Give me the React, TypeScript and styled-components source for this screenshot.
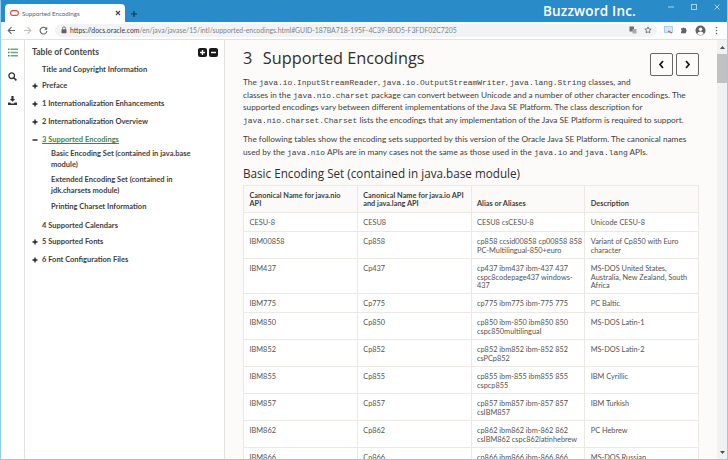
import React from 'react';
import styled, { createGlobalStyle } from 'styled-components';

interface TocEntry {
  label: string;
  mark?: 'plus' | 'minus';
  active?: boolean;
  top: number;
}

const tocEntries: TocEntry[] = [
  { label: 'Title and Copyright Information', top: 6 },
  { label: 'Preface', mark: 'plus', top: 5 },
  { label: '1 Internationalization Enhancements', mark: 'plus', top: 7 },
  { label: '2 Internationalization Overview', mark: 'plus', top: 7 },
  { label: '3 Supported Encodings', mark: 'minus', active: true, top: 7 },
];

const tocSubEntries = [
  { label: 'Basic Encoding Set (contained in java.base module)', top: 3 },
  { label: 'Extended Encoding Set (contained in jdk.charsets module)', top: 4 },
  { label: 'Printing Charset Information', top: 5 },
];

const tocAfter: TocEntry[] = [
  { label: '4 Supported Calendars', top: 8 },
  { label: '5 Supported Fonts', mark: 'plus', top: 5 },
  { label: '6 Font Configuration Files', mark: 'plus', top: 7 },
];

const rows = [
  ['CESU-8', 'CESU8', 'CESU8 csCESU-8', 'Unicode CESU-8', 19],
  ['IBM00858', 'Cp858', 'cp858 ccsid00858 cp00858 858 PC-Multilingual-850+euro', 'Variant of Cp850 with Euro character', 27],
  ['IBM437', 'Cp437', 'cp437 ibm437 ibm-437 437 cspc8codepage437 windows-437', 'MS-DOS United States, Australia, New Zealand, South Africa', 35],
  ['IBM775', 'Cp775', 'cp775 ibm775 ibm-775 775', 'PC Baltic', 19],
  ['IBM850', 'Cp850', 'cp850 ibm-850 ibm850 850 cspc850multilingual', 'MS-DOS Latin-1', 27],
  ['IBM852', 'Cp852', 'cp852 ibm852 ibm-852 852 csPCp852', 'MS-DOS Latin-2', 27],
  ['IBM855', 'Cp855', 'cp855 ibm-855 ibm855 855 cspcp855', 'IBM Cyrillic', 27],
  ['IBM857', 'Cp857', 'cp857 ibm857 ibm-857 857 csIBM857', 'IBM Turkish', 27],
  ['IBM862', 'Cp862', 'cp862 ibm862 ibm-862 862 csIBM862 cspc862latinhebrew', 'PC Hebrew', 27],
  ['IBM866', 'Cp866', 'cp866 ibm866 ibm-866 866 csIBM866', 'MS-DOS Russian', 27],
] as const;

const GlobalStyle = createGlobalStyle`
  html, body {
    margin: 0;
    padding: 0;
    overflow: hidden;
  }
  * {
    box-sizing: border-box;
  }
`;

const Window = styled.div`
  width: 728px;
  height: 460px;
  display: flex;
  flex-direction: column;
  border: 1px solid #8fcdf0;
  border-top: none;
  font-family: Lato, 'Open Sans', sans-serif;
  overflow: hidden;
  background: #fff;
`;

const TitleBar = styled.div`
  height: 22px;
  flex: none;
  display: flex;
  align-items: flex-end;
  background: #2a8bc9;
  padding-left: 4px;
`;

const Tab = styled.div`
  width: 120px;
  height: 18px;
  display: flex;
  align-items: center;
  background: #fff;
  border-radius: 4px 4px 0 0;
  padding: 0 4px 0 5px;
  font-size: 6.2px;
  color: #5f6368;
`;

const TabLabel = styled.span`
  margin-left: 3px;
  flex: 1;
`;

const NewTab = styled.div`
  display: flex;
  margin: 0 0 4px 5px;
`;

const Brand = styled.div`
  margin-left: auto;
  align-self: flex-start;
  margin-top: 1px;
  font-family: 'Open Sans', sans-serif;
  font-size: 13.5px;
  font-weight: 600;
  letter-spacing: 0.2px;
  color: #fff;
  line-height: 20px;
`;

const WindowControls = styled.div`
  width: 91px;
  align-self: flex-start;
  display: flex;
  justify-content: flex-end;
  gap: 15px;
  padding: 3px 6px 0 0;
`;

const ToolBar = styled.div`
  height: 18px;
  flex: none;
  display: flex;
  align-items: center;
  background: #fff;
  border-bottom: 1px solid #dfe1e5;
  padding: 0 3px 1px 2px;
`;

const NavIcon = styled.div`
  width: 16px;
  display: flex;
  justify-content: center;
  align-items: center;
`;

const AddressBar = styled.div`
  width: 602px;
  height: 13px;
  margin: 0 3px 0 4px;
  display: flex;
  align-items: center;
  gap: 3px;
  background: #f1f3f4;
  border-radius: 7px;
  padding: 0 1px 0 6px;
`;

const Url = styled.span`
  flex: 1;
  font-size: 6.85px;
  color: #80868b;
  white-space: nowrap;
  b {
    font-weight: 400;
    color: #3c4043;
  }
`;

const Body = styled.div`
  flex: 1;
  min-height: 0;
  display: flex;
`;

const Rail = styled.nav`
  width: 24px;
  flex: none;
  display: flex;
  flex-direction: column;
  align-items: center;
  gap: 15px;
  padding-top: 8px;
  border-right: 1px solid #e4e2df;
`;

const Toc = styled.aside`
  width: 200px;
  flex: none;
  padding: 6px 6px 0 7px;
  border-right: 1px solid #e4e2df;
  color: #3f3d3a;
`;

const TocHeader = styled.div`
  display: flex;
  align-items: center;
  height: 12px;
  font-size: 8.6px;
  font-weight: 700;
  color: #444;
`;

const TocButtons = styled.div`
  margin-left: auto;
  display: flex;
  gap: 2px;
`;

const SquareButton = styled.div`
  width: 9px;
  height: 9px;
  background: #1a1a1a;
  border-radius: 2px;
  display: flex;
  align-items: center;
  justify-content: center;
`;

const TocList = styled.ul`
  list-style: none;
  margin: 0;
  padding: 0;
`;

const TocRow = styled.li<{ $top: number }>`
  display: flex;
  margin-top: ${(p) => p.$top}px;
  font-size: 7.5px;
  font-weight: 700;
  line-height: 11px;
`;

const TocMark = styled.span`
  width: 10px;
  flex: none;
  display: flex;
  align-items: center;
`;

const TocLabel = styled.span<{ $active?: boolean }>`
  color: ${(p) => (p.$active ? '#4a7f4a' : '#3f3d3a')};
  text-decoration: ${(p) => (p.$active ? 'underline' : 'none')};
`;

const TocSubRow = styled.li<{ $top: number }>`
  margin: ${(p) => p.$top}px 20px 0 19px;
  font-size: 7.5px;
  font-weight: 700;
  line-height: 11px;
`;

const Main = styled.main`
  flex: 1;
  min-width: 0;
  background: #fcfbfa;
  padding: 6px 18px 0;
  overflow: hidden;
  color: #3f3d3a;
`;

const PageHead = styled.div`
  display: flex;
  align-items: flex-start;
  height: 30px;
`;

const PageTitle = styled.h1`
  margin: 0;
  font-family: 'Open Sans', sans-serif;
  font-size: 16.3px;
  font-weight: 400;
  line-height: 24px;
  color: #312d2a;
  span {
    margin-right: 10.5px;
  }
`;

const PagerGroup = styled.div`
  margin-left: auto;
  margin-top: 7px;
  display: flex;
  gap: 3px;
`;

const PagerButton = styled.div`
  width: 23px;
  height: 23px;
  border: 1px solid #666;
  border-radius: 2px;
  display: flex;
  align-items: center;
  justify-content: center;
`;

const Para = styled.p`
  margin: 0 0 6.5px;
  font-size: 8.25px;
  line-height: 12.7px;
  white-space: nowrap;
  code {
    font-family: 'Liberation Mono', monospace;
    font-size: 7.95px;
    line-height: 0;
  }
`;

const SectionTitle = styled.h2`
  margin: 6px 0 4px;
  font-family: 'Open Sans', sans-serif;
  font-size: 11.7px;
  font-weight: 400;
  line-height: 16px;
  color: #312d2a;
`;

const Table = styled.table`
  width: 456px;
  table-layout: fixed;
  border-collapse: collapse;
  background: #fff;
  font-size: 7.35px;
  line-height: 8.3px;
  color: #555250;
  th, td {
    border: 1px solid #ece9e5;
    padding: 6px 2px 0 5.5px;
    text-align: left;
    vertical-align: top;
  }
  th {
    background: #fbfaf8;
    font-weight: 700;
    color: #3f3d3a;
    vertical-align: bottom;
    padding: 0 6px 4px 5.5px;
  }
`;

const HeadRow = styled.tr`
  height: 27px;
`;

const Scrollbar = styled.div`
  width: 10px;
  flex: none;
  display: flex;
  flex-direction: column;
  background: #f1f1f1;
`;

const ScrollArrow = styled.div`
  height: 14px;
  flex: none;
  display: flex;
  align-items: center;
  justify-content: center;
`;

const ScrollThumb = styled.div`
  height: 29px;
  flex: none;
  background: #c1c1c1;
`;

const ScrollTrack = styled.div`
  flex: 1;
`;

const PlusMark = () => (
  <svg width="6" height="6" viewBox="0 0 6 6">
    <path d="M2.3 0.5h1.4v1.8h1.8v1.4H3.7v1.8H2.3V3.7H0.5V2.3h1.8z" fill="#222" />
  </svg>
);

const MinusMark = () => (
  <svg width="6" height="6" viewBox="0 0 6 6">
    <rect x="0.5" y="2.3" width="5" height="1.4" fill="#222" />
  </svg>
);

const TocEntryRow: React.FC<{ entry: TocEntry }> = ({ entry }) => (
  <TocRow $top={entry.top}>
    <TocMark>{entry.mark === 'plus' ? <PlusMark /> : entry.mark === 'minus' ? <MinusMark /> : null}</TocMark>
    <TocLabel $active={entry.active}>{entry.label}</TocLabel>
  </TocRow>
);

export default function App() {
  return (
    <Window>
      <GlobalStyle />
      <TitleBar>
        <Tab>
          <svg width="9" height="6" viewBox="0 0 9 6">
            <rect x="0.6" y="0.6" width="7.8" height="4.8" rx="2.4" fill="none" stroke="#e5483a" strokeWidth="1.1" />
          </svg>
          <TabLabel>Supported Encodings</TabLabel>
          <svg width="6" height="6" viewBox="0 0 6 6">
            <path d="M1 1l4 4M5 1l-4 4" stroke="#444" strokeWidth="1.1" />
          </svg>
        </Tab>
        <NewTab>
          <svg width="8" height="8" viewBox="0 0 8 8">
            <path d="M4 1v6M1 4h6" stroke="#10324a" strokeWidth="1.1" />
          </svg>
        </NewTab>
        <Brand>Buzzword Inc.</Brand>
        <WindowControls>
          <svg width="8" height="8" viewBox="0 0 8 8">
            <path d="M1 4h6" stroke="#a9d3ee" />
          </svg>
          <svg width="8" height="8" viewBox="0 0 8 8">
            <rect x="1.5" y="1.5" width="5" height="5" fill="none" stroke="#a9d3ee" />
          </svg>
          <svg width="8" height="8" viewBox="0 0 8 8">
            <path d="M1.5 1.5l5 5M6.5 1.5l-5 5" stroke="#a9d3ee" />
          </svg>
        </WindowControls>
      </TitleBar>
      <ToolBar>
        <NavIcon>
          <svg width="9" height="9" viewBox="0 0 9 9">
            <path d="M8 4.5H1.5M4.5 1.2L1.2 4.5l3.3 3.3" fill="none" stroke="#5f6368" strokeWidth="1.1" />
          </svg>
        </NavIcon>
        <NavIcon>
          <svg width="9" height="9" viewBox="0 0 9 9">
            <path d="M1 4.5h6.5M4.5 1.2l3.3 3.3-3.3 3.3" fill="none" stroke="#bdc1c6" strokeWidth="1.1" />
          </svg>
        </NavIcon>
        <NavIcon>
          <svg width="9" height="9" viewBox="0 0 9 9">
            <path d="M7.6 3.2A3.4 3.4 0 1 0 7.9 5" fill="none" stroke="#5f6368" strokeWidth="1.1" />
            <path d="M8.2 0.8v3H5.2z" fill="#5f6368" />
          </svg>
        </NavIcon>
        <AddressBar>
          <svg width="6" height="8" viewBox="0 0 6 8">
            <rect x="0.5" y="3.2" width="5" height="4" rx="0.6" fill="#5f6368" />
            <path d="M1.6 3.4V2.2a1.4 1.4 0 0 1 2.8 0v1.2" fill="none" stroke="#5f6368" strokeWidth="0.8" />
          </svg>
          <Url>
            <b>https://docs.oracle.com</b>/en/java/javase/15/intl/supported-encodings.html#GUID-187BA718-195F-4C39-B0D5-F3FDF02C7205
          </Url>
          <svg width="8" height="8" viewBox="0 0 8 8">
            <rect x="0.5" y="0.5" width="4.5" height="5" fill="#6b6f73" />
            <rect x="3.5" y="3" width="4" height="4.5" fill="#a6a9ad" />
          </svg>
          <NavIcon>
            <svg width="8" height="8" viewBox="0 0 8 8">
              <path d="M4 0.9l0.95 2.1 2.2 0.2-1.65 1.5 0.5 2.2L4 5.8 2 6.9l0.5-2.2L0.85 3.2l2.2-0.2z" fill="none" stroke="#5f6368" strokeWidth="0.8" />
            </svg>
          </NavIcon>
        </AddressBar>
        <NavIcon>
          <svg width="9" height="8" viewBox="0 0 9 8">
            <rect x="0.5" y="0.5" width="8" height="6" fill="#d3e7f8" stroke="#7fb4e3" strokeWidth="0.6" />
            <path d="M4 5l4 2" stroke="#e5483a" strokeWidth="1.2" />
          </svg>
        </NavIcon>
        <NavIcon>
          <svg width="8" height="8" viewBox="0 0 8 8">
            <path d="M1 2.3h1.6a1 1 0 0 1 1.9 0H6v1.5a1 1 0 0 1 0 1.9V7.2H1V5.7a1 1 0 0 0 0-1.9z" fill="#5f6368" />
          </svg>
        </NavIcon>
        <NavIcon>
          <svg width="11" height="11" viewBox="0 0 11 11">
            <circle cx="5.5" cy="5.5" r="5" fill="#5f6368" />
            <circle cx="5.5" cy="4.2" r="1.7" fill="#fff" />
            <path d="M2.3 8.4a3.6 3.6 0 0 1 6.4 0 4 4 0 0 1-6.4 0z" fill="#fff" />
          </svg>
        </NavIcon>
        <NavIcon>
          <svg width="3" height="9" viewBox="0 0 3 9">
            <circle cx="1.5" cy="1.5" r="0.8" fill="#5f6368" />
            <circle cx="1.5" cy="4.5" r="0.8" fill="#5f6368" />
            <circle cx="1.5" cy="7.5" r="0.8" fill="#5f6368" />
          </svg>
        </NavIcon>
      </ToolBar>
      <Body>
        <Rail>
          <svg width="10" height="9" viewBox="0 0 10 9">
            <path d="M0 0.5h1.5v1.6H0zM0 3.7h1.5v1.6H0zM0 6.9h1.5v1.6H0z" fill="#4f8a5b" />
            <path d="M2.5 0.5H10v1.6H2.5zM2.5 3.7H10v1.6H2.5zM2.5 6.9H10v1.6H2.5z" fill="#6fa67a" />
          </svg>
          <svg width="9" height="9" viewBox="0 0 9 9">
            <circle cx="3.7" cy="3.7" r="2.8" fill="none" stroke="#333" strokeWidth="1.3" />
            <path d="M5.8 5.8l2.6 2.6" stroke="#333" strokeWidth="1.6" />
          </svg>
          <svg width="9" height="9" viewBox="0 0 9 9">
            <path d="M3.4 0h2.2v3h1.7L4.5 5.8 1.7 3h1.7zM0 6.4h2.2l1 1h2.6l1-1H9V9H0z" fill="#333" />
          </svg>
        </Rail>
        <Toc>
          <TocHeader>
            Table of Contents
            <TocButtons>
              <SquareButton>
                <svg width="7" height="7" viewBox="0 0 7 7">
                  <path d="M3.5 1v5M1 3.5h5" stroke="#fff" strokeWidth="1.4" />
                </svg>
              </SquareButton>
              <SquareButton>
                <svg width="7" height="7" viewBox="0 0 7 7">
                  <path d="M1 3.5h5" stroke="#fff" strokeWidth="1.4" />
                </svg>
              </SquareButton>
            </TocButtons>
          </TocHeader>
          <TocList>
            {tocEntries.map((entry) => (
              <TocEntryRow key={entry.label} entry={entry} />
            ))}
            {tocSubEntries.map((entry) => (
              <TocSubRow key={entry.label} $top={entry.top}>
                {entry.label}
              </TocSubRow>
            ))}
            {tocAfter.map((entry) => (
              <TocEntryRow key={entry.label} entry={entry} />
            ))}
          </TocList>
        </Toc>
        <Main>
          <PageHead>
            <PageTitle>
              <span>3</span>Supported Encodings
            </PageTitle>
            <PagerGroup>
              <PagerButton>
                <svg width="7" height="9" viewBox="0 0 7 9">
                  <path d="M5 1L2 4.5 5 8" fill="none" stroke="#111" strokeWidth="1.7" />
                </svg>
              </PagerButton>
              <PagerButton>
                <svg width="7" height="9" viewBox="0 0 7 9">
                  <path d="M2 1l3 3.5L2 8" fill="none" stroke="#111" strokeWidth="1.7" />
                </svg>
              </PagerButton>
            </PagerGroup>
          </PageHead>
          <Para>
            The <code>java.io.InputStreamReader</code>, <code>java.io.OutputStreamWriter</code>, <code>java.lang.String</code> classes, and
            <br />
            classes in the <code>java.nio.charset</code> package can convert between Unicode and a number of other character encodings. The
            <br />
            supported encodings vary between different implementations of the Java SE Platform. The class description for
            <br />
            <code>java.nio.charset.Charset</code> lists the encodings that any implementation of the Java SE Platform is required to support.
          </Para>
          <Para>
            The following tables show the encoding sets supported by this version of the Oracle Java SE Platform. The canonical names
            <br />
            used by the <code>java.nio</code> APIs are in many cases not the same as those used in the <code>java.io</code> and <code>java.lang</code> APIs.
          </Para>
          <SectionTitle>Basic Encoding Set (contained in java.base module)</SectionTitle>
          <Table>
            <thead>
              <HeadRow>
                <th>Canonical Name for java.nio API</th>
                <th>Canonical Name for java.io API and java.lang API</th>
                <th>Alias or Aliases</th>
                <th>Description</th>
              </HeadRow>
            </thead>
            <tbody>
              {rows.map((row) => (
                <tr key={row[0]} style={{ height: row[4] }}>
                  <td>{row[0]}</td>
                  <td>{row[1]}</td>
                  <td>{row[2]}</td>
                  <td>{row[3]}</td>
                </tr>
              ))}
            </tbody>
          </Table>
        </Main>
        <Scrollbar>
          <ScrollArrow>
            <svg width="5" height="3" viewBox="0 0 5 3">
              <path d="M2.5 0L5 3H0z" fill="#505050" />
            </svg>
          </ScrollArrow>
          <ScrollThumb />
          <ScrollTrack />
          <ScrollArrow>
            <svg width="5" height="3" viewBox="0 0 5 3">
              <path d="M2.5 3L5 0H0z" fill="#505050" />
            </svg>
          </ScrollArrow>
        </Scrollbar>
      </Body>
    </Window>
  );
}
